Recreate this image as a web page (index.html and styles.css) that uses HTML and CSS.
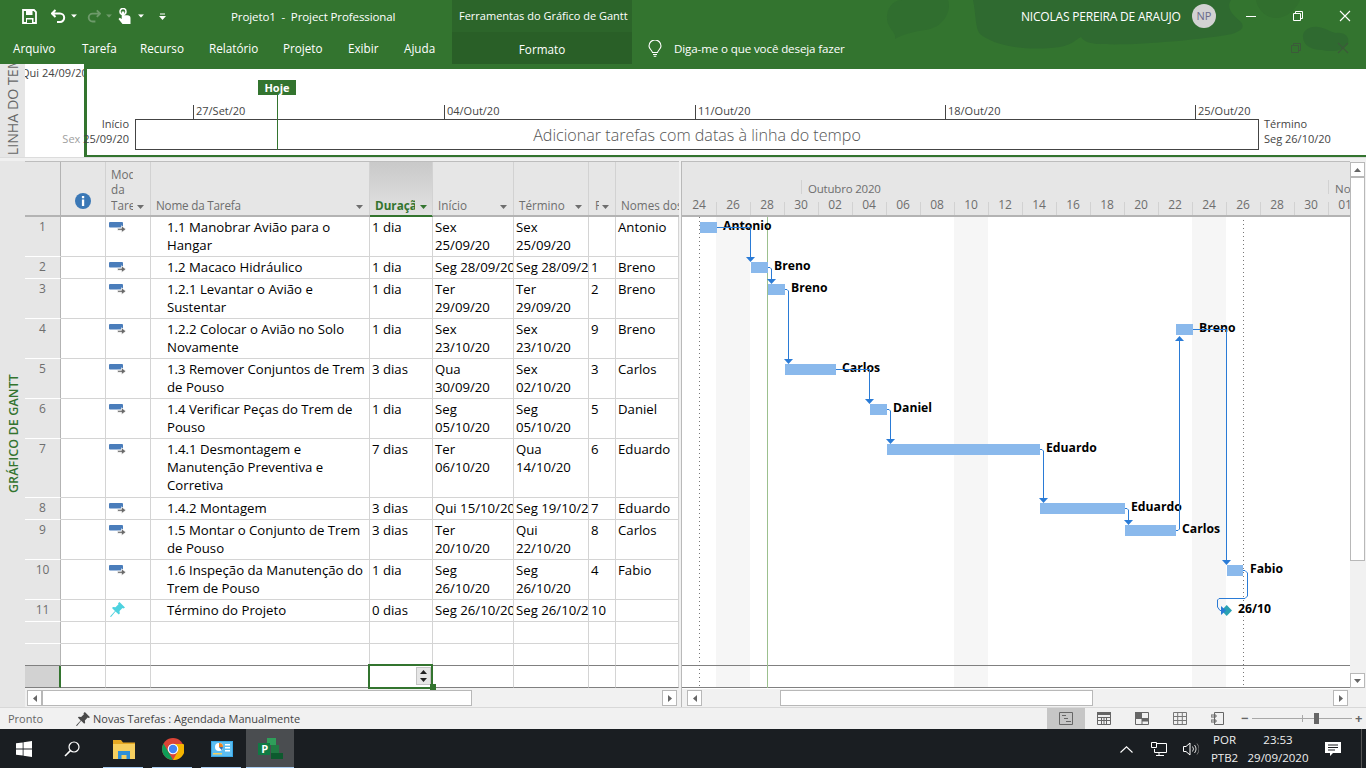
FILE: index.html
```html
<!DOCTYPE html>
<html lang="pt-BR">
<head>
<meta charset="utf-8">
<title>Projeto1 - Project Professional</title>
<link rel="stylesheet" href="styles.css">
</head>
<body>
<svg class="sprite" width="0" height="0" aria-hidden="true">
  <symbol id="mode" viewBox="0 0 17 11">
    <rect x="0" y="0" width="14" height="5.500" rx="1" fill="#4a7dbb"/>
    <path d="M8.500 6.300h4V3.800l4.500 3.400-4.500 3.400V8.300h-4z" fill="#6a6a6a" stroke="#fff" stroke-width=".7"/>
  </symbol>
  <symbol id="caret" viewBox="0 0 7 4"><path d="M0 0h7L3.500 4z"/></symbol>
</svg>
<div class="app">
  <header class="ribbon">
    <svg class="ribbon-art" viewBox="0 0 1366 64" width="1366" height="64" aria-hidden="true">
      <path d="M887 16C888 4 896 0 902 0H948C952 10 944 28 925 30C912 32 904 34 895 39C897 32 886 28 887 16Z" fill="#306e2f"/>
      <path d="M973 0C976 14 975 28 980 34C992 44 1020 52 1060 47C1072 45 1078 38 1081 37C1084 42 1092 44 1100 44C1130 46 1200 40 1232 34C1244 30 1244 26 1241 22C1232 14 1226 8 1231 0Z" fill="#2f6a30"/>
      <path d="M1303 38C1302 30 1310 26 1318 27C1326 28 1330 32 1336 33C1344 32 1350 36 1348 44C1342 52 1330 52 1322 50C1312 50 1304 46 1303 38Z" fill="#2f6a30"/>
      <path d="M1256 0H1300C1296 10 1286 18 1276 18C1266 18 1258 10 1256 0Z" fill="#316f2e"/>
    </svg>
    <div class="titlebar">
      <div class="qat">
        <svg class="qi save" viewBox="0 0 15 15"><path d="M1 1h11l2 2v11H1z" fill="none" stroke="#fff" stroke-width="1.800"/><path d="M4 1.500h6.500V6H4zM4 9h7.500v5H4z" fill="#fff"/><path d="M5 10.500h5v3.500H5z" fill="#33742f"/></svg>
        <svg class="qi undo" viewBox="0 0 15 14"><path d="M4.500 1 1 4.500 4.500 8M1.500 4.500H9a4.200 4.200 0 0 1 0 8.400H6" fill="none" stroke="#fff" stroke-width="2"/></svg>
        <svg class="car" viewBox="0 0 7 4"><use href="#caret"/></svg>
        <svg class="qi redo" viewBox="0 0 15 14"><path d="M10.500 1 14 4.500 10.500 8M13.500 4.500H6a4.200 4.200 0 0 0 0 8.400H9" fill="none" stroke="#6d9a6a" stroke-width="2"/></svg>
        <svg class="car dim" viewBox="0 0 7 4"><use href="#caret"/></svg>
        <svg class="qi touch" viewBox="0 0 13 16"><circle cx="5" cy="3.500" r="3" fill="none" stroke="#fff" stroke-width="1.500"/><path d="M3.700 3.500h2.600v3.700h3.200c1.800 0 3 1 3 2.800V16H4.500L.5 11l1.300-1.300 1.900 1.300z" fill="#fff"/></svg>
        <svg class="car" viewBox="0 0 7 4"><use href="#caret"/></svg>
        <svg class="cust" viewBox="0 0 7 7"><path d="M1 .5h5v1H1zM0 3h7L3.500 7z" fill="#fff"/></svg>
      </div>
      <div class="doc-title">Projeto1&nbsp; - &nbsp;Project Professional</div>
      <div class="context-title">Ferramentas do Gráfico de Gantt</div>
      <div class="account">
        <span class="user">NICOLAS PEREIRA DE ARAUJO</span>
        <span class="avatar">NP</span>
        <div class="winbtns">
          <svg class="wb" viewBox="0 0 12 12"><path d="M1 6.500h10" stroke="#fff"/></svg>
          <svg class="wb" viewBox="0 0 12 12"><path d="M1.500 3.500h7v7h-7zM3.500 3.500v-2h7v7h-2" fill="none" stroke="#fff"/></svg>
          <svg class="wb" viewBox="0 0 12 12"><path d="M1 1l10 10M11 1 1 11" stroke="#fff" stroke-width="1.100"/></svg>
        </div>
      </div>
    </div>
    <nav class="tabs">
      <span class="tab t-arq">Arquivo</span>
      <span class="tab t-tar">Tarefa</span>
      <span class="tab t-rec">Recurso</span>
      <span class="tab t-rel">Relatório</span>
      <span class="tab t-pro">Projeto</span>
      <span class="tab t-exi">Exibir</span>
      <span class="tab t-aju">Ajuda</span>
      <span class="tab-format">Formato</span>
      <svg class="bulb" viewBox="0 0 14 17"><path d="M4.500 12.500C4 10 1 9 1 6a6 6 0 0 1 12 0c0 3-3 4-3.500 6.500zM5 14.500h4M5.700 16.300h2.600" fill="none" stroke="#fff" stroke-width="1.100"/></svg>
      <span class="tell">Diga-me o que você deseja fazer</span>
      <div class="ribbon-ctl">
        <svg class="wb" viewBox="0 0 12 12"><path d="M1.500 3.500h7v7h-7zM3.500 3.500v-2h7v7h-2" fill="none" stroke="#3c5a3a"/></svg>
        <svg class="wb" viewBox="0 0 12 12"><path d="M1 1l10 10M11 1 1 11" stroke="#3c5a3a" stroke-width="1.100"/></svg>
      </div>
    </nav>
  </header>

  <section class="timeline">
    <div class="vstrip tl-strip"><span class="vlabel tl-label">LINHA DO TEMPO</span></div>
    <div class="tl-prev"><span>Qui 24/09/20</span></div>
    <div class="tl-main">
      <div class="tl-scale">
        <div class="today">Hoje</div>
        <span class="tick tk1">27/Set/20</span>
        <span class="tick tk2">04/Out/20</span>
        <span class="tick tk3">11/Out/20</span>
        <span class="tick tk4">18/Out/20</span>
        <span class="tick tk5">25/Out/20</span>
      </div>
      <div class="tl-row">
        <div class="tl-start"><span>Início</span><span><i>Sex </i>25/09/20</span></div>
        <div class="tl-box">Adicionar tarefas com datas à linha do tempo</div>
        <div class="tl-end"><span>Término</span><span>Seg 26/10/20</span></div>
      </div>
    </div>
  </section>
  <div class="band"></div>

  <main class="workspace">
    <div class="vstrip gantt-strip"><span class="vlabel gantt-label">GRÁFICO DE GANTT</span></div>

    <div class="sheet">
      <div class="cols head">
        <div class="hc"></div>
        <div class="hc hc-info"><svg class="info" viewBox="0 0 16 16"><circle cx="8" cy="8" r="8" fill="#3b78b6"/><path d="M6.900 3h2.300v2.200H6.900zM6.900 6.500h2.300V13H6.900z" fill="#fff"/></svg></div>
        <div class="hc hc-mode"><span class="clip">Modo<br>da<br>Tarefa</span><svg class="car gray" viewBox="0 0 7 4"><use href="#caret"/></svg></div>
        <div class="hc"><span class="grow pl name-h">Nome da Tarefa</span><svg class="car gray" viewBox="0 0 7 4"><use href="#caret"/></svg></div>
        <div class="hc hc-sel"><span class="sel-text">Duração</span><svg class="car green" viewBox="0 0 7 4"><use href="#caret"/></svg></div>
        <div class="hc"><span class="grow pl">Início</span><svg class="car gray" viewBox="0 0 7 4"><use href="#caret"/></svg></div>
        <div class="hc"><span class="grow pl">Término</span><svg class="car gray" viewBox="0 0 7 4"><use href="#caret"/></svg></div>
        <div class="hc"><span class="clip narrow">Predecessoras</span><svg class="car gray" viewBox="0 0 7 4"><use href="#caret"/></svg></div>
        <div class="hc hc-last"><span class="clip pl">Nomes dos Recursos</span></div>
      </div>

      <div class="cols row tall"><div class="num">1</div><div class="c"></div><div class="c m"><svg class="mode"><use href="#mode"/></svg></div><div class="c n">1.1 Manobrar Avião para o<br>Hangar</div><div class="c">1 dia</div><div class="c">Sex<br>25/09/20</div><div class="c">Sex<br>25/09/20</div><div class="c"></div><div class="c">Antonio</div></div>
      <div class="cols row"><div class="num">2</div><div class="c"></div><div class="c m"><svg class="mode"><use href="#mode"/></svg></div><div class="c n">1.2 Macaco Hidráulico</div><div class="c">1 dia</div><div class="c">Seg 28/09/20</div><div class="c">Seg 28/09/20</div><div class="c">1</div><div class="c">Breno</div></div>
      <div class="cols row tall"><div class="num">3</div><div class="c"></div><div class="c m"><svg class="mode"><use href="#mode"/></svg></div><div class="c n">1.2.1 Levantar o Avião e<br>Sustentar</div><div class="c">1 dia</div><div class="c">Ter<br>29/09/20</div><div class="c">Ter<br>29/09/20</div><div class="c">2</div><div class="c">Breno</div></div>
      <div class="cols row tall"><div class="num">4</div><div class="c"></div><div class="c m"><svg class="mode"><use href="#mode"/></svg></div><div class="c n">1.2.2 Colocar o Avião no Solo<br>Novamente</div><div class="c">1 dia</div><div class="c">Sex<br>23/10/20</div><div class="c">Sex<br>23/10/20</div><div class="c">9</div><div class="c">Breno</div></div>
      <div class="cols row tall"><div class="num">5</div><div class="c"></div><div class="c m"><svg class="mode"><use href="#mode"/></svg></div><div class="c n">1.3 Remover Conjuntos de Trem<br>de Pouso</div><div class="c">3 dias</div><div class="c">Qua<br>30/09/20</div><div class="c">Sex<br>02/10/20</div><div class="c">3</div><div class="c">Carlos</div></div>
      <div class="cols row tall"><div class="num">6</div><div class="c"></div><div class="c m"><svg class="mode"><use href="#mode"/></svg></div><div class="c n">1.4 Verificar Peças do Trem de<br>Pouso</div><div class="c">1 dia</div><div class="c">Seg<br>05/10/20</div><div class="c">Seg<br>05/10/20</div><div class="c">5</div><div class="c">Daniel</div></div>
      <div class="cols row taller"><div class="num">7</div><div class="c"></div><div class="c m"><svg class="mode"><use href="#mode"/></svg></div><div class="c n">1.4.1 Desmontagem e<br>Manutenção Preventiva e<br>Corretiva</div><div class="c">7 dias</div><div class="c">Ter<br>06/10/20</div><div class="c">Qua<br>14/10/20</div><div class="c">6</div><div class="c">Eduardo</div></div>
      <div class="cols row"><div class="num">8</div><div class="c"></div><div class="c m"><svg class="mode"><use href="#mode"/></svg></div><div class="c n">1.4.2 Montagem</div><div class="c">3 dias</div><div class="c">Qui 15/10/20</div><div class="c">Seg 19/10/20</div><div class="c">7</div><div class="c">Eduardo</div></div>
      <div class="cols row tall"><div class="num">9</div><div class="c"></div><div class="c m"><svg class="mode"><use href="#mode"/></svg></div><div class="c n">1.5 Montar o Conjunto de Trem<br>de Pouso</div><div class="c">3 dias</div><div class="c">Ter<br>20/10/20</div><div class="c">Qui<br>22/10/20</div><div class="c">8</div><div class="c">Carlos</div></div>
      <div class="cols row tall"><div class="num">10</div><div class="c"></div><div class="c m"><svg class="mode"><use href="#mode"/></svg></div><div class="c n">1.6 Inspeção da Manutenção do<br>Trem de Pouso</div><div class="c">1 dia</div><div class="c">Seg<br>26/10/20</div><div class="c">Seg<br>26/10/20</div><div class="c">4</div><div class="c">Fabio</div></div>
      <div class="cols row"><div class="num">11</div><div class="c"></div><div class="c m"><svg class="pin" viewBox="0 0 15 15"><path d="M9.500 0 15 5.500l-1.500 1-1-.5-3 3 .3 2.500-1 1L5.500 9.500 1 15l-1-.5L5 9 2 6l1-1 2.500.300 3-3-.5-1z" fill="#4dd2df"/></svg></div><div class="c n">Término do Projeto</div><div class="c">0 dias</div><div class="c">Seg 26/10/20</div><div class="c">Seg 26/10/20</div><div class="c">10</div><div class="c"></div></div>
      <div class="cols row"><div class="num"></div><div class="c"></div><div class="c"></div><div class="c"></div><div class="c"></div><div class="c"></div><div class="c"></div><div class="c"></div><div class="c"></div></div>
      <div class="cols row lastrow"><div class="num"></div><div class="c"></div><div class="c"></div><div class="c"></div><div class="c"></div><div class="c"></div><div class="c"></div><div class="c"></div><div class="c"></div></div>
      <div class="cols row active"><div class="num"></div><div class="c"></div><div class="c"></div><div class="c"></div><div class="c c-cur">
          <span class="spin"><svg class="spin-a" viewBox="0 0 7 4"><path d="M0 4h7L3.500 0z"/></svg><svg class="spin-a" viewBox="0 0 7 4"><use href="#caret"/></svg></span>
          <span class="handle"></span>
        </div><div class="c"></div><div class="c"></div><div class="c"></div><div class="c"></div></div>

      <div class="hscroll hs-left">
        <span class="sb-btn"><svg viewBox="0 0 4 7"><path d="M4 0v7L0 3.500z"/></svg></span>
        <span class="sb-thumb th-left"></span>
        <span class="sb-track"></span>
        <span class="sb-btn"><svg viewBox="0 0 4 7"><path d="M0 0v7l4-3.500z"/></svg></span>
      </div>
    </div>

    <div class="split"></div>

    <div class="chart">
      <div class="ch-head">
        <div class="ch-months"><span class="mon-pad"></span><span class="mon m-out">Outubro 2020</span><span class="mon m-nov">Nov</span></div>
        <div class="ch-days">
          <span>24</span><span>26</span><span>28</span><span>30</span><span>02</span><span>04</span><span>06</span><span>08</span><span>10</span><span>12</span><span>14</span><span>16</span><span>18</span><span>20</span><span>22</span><span>24</span><span>26</span><span>28</span><span>30</span><span>01</span>
        </div>
      </div>
      <svg class="ch-body" viewBox="682 217 668 472" width="668" height="472">
        <g fill="#f6f6f6">
          <rect x="716" y="217" width="34" height="471"/>
          <rect x="954" y="217" width="34" height="471"/>
          <rect x="1192" y="217" width="34" height="471"/>
        </g>
        <path d="M682 665.500H1350M682 687.500H1350" stroke="#808080"/>
        <path d="M699.500 217V688" stroke="#777" stroke-dasharray="1 3"/>
        <path d="M1243.500 220V688" stroke="#777" stroke-dasharray="1 3"/>
        <path d="M767.500 217V688" stroke="#9cc08e"/>
        <g fill="#8ab9ec">
          <rect x="700" y="222" width="17" height="11"/>
          <rect x="751" y="262" width="17" height="11"/>
          <rect x="768" y="284" width="17" height="11"/>
          <rect x="1176" y="324" width="17" height="11"/>
          <rect x="785" y="364" width="51" height="11"/>
          <rect x="870" y="404" width="17" height="11"/>
          <rect x="887" y="444" width="153" height="11"/>
          <rect x="1040" y="503" width="85" height="11"/>
          <rect x="1125" y="525" width="51" height="11"/>
          <rect x="1227" y="565" width="16" height="11"/>
        </g>
        <g class="labels">
          <text x="723" y="230">Antonio</text>
          <text x="774" y="270">Breno</text>
          <text x="791" y="292">Breno</text>
          <text x="1199" y="332">Breno</text>
          <text x="842" y="372">Carlos</text>
          <text x="893" y="412">Daniel</text>
          <text x="1046" y="452">Eduardo</text>
          <text x="1131" y="511">Eduardo</text>
          <text x="1182" y="533">Carlos</text>
          <text x="1250" y="573">Fabio</text>
          <text x="1238" y="613">26/10</text>
        </g>
        <g fill="none" stroke="#2a7bd6">
          <path d="M717 227.500H750.500V258"/>
          <path d="M768 267.500H770L771.500 269V280"/>
          <path d="M785 289.500H787L788.500 291V360"/>
          <path d="M836 369.500H869.500V400"/>
          <path d="M887 409.500H889L890.500 411V440"/>
          <path d="M1040 449.500H1042L1043.500 451V499"/>
          <path d="M1125 508.500H1127L1128.500 510V521"/>
          <path d="M1176 530.500H1178L1179.500 529V340"/>
          <path d="M1193 329.500H1226.500V561"/>
          <path d="M1243 570.500H1245L1247.500 573V596L1245 598.500H1219L1217.500 600V607L1220 610.500H1225"/>
        </g>
        <g fill="#2a7bd6">
          <path d="M746 257h9l-4.500 5z"/>
          <path d="M767 279h9l-4.500 5z"/>
          <path d="M784 359h9l-4.500 5z"/>
          <path d="M865 399h9l-4.500 5z"/>
          <path d="M886 439h9l-4.500 5z"/>
          <path d="M1039 498h9l-4.500 5z"/>
          <path d="M1124 520h9l-4.500 5z"/>
          <path d="M1175 341h9l-4.500-5z"/>
          <path d="M1222 560h9l-4.500 5z"/>
        </g>
        <path d="M1226.700 605 1232 610.500 1226.700 616 1221.500 610.500z" fill="#2aa1b3"/>
        <path d="M1221 606v9l5-4.500z" fill="#2a7bd6"/>
      </svg>
      <div class="hscroll hs-right">
        <span class="sb-offset"></span>
        <span class="sb-btn"><svg viewBox="0 0 4 7"><path d="M4 0v7L0 3.500z"/></svg></span>
        <span class="sb-track t1"></span>
        <span class="sb-thumb th-right"></span>
        <span class="sb-track"></span>
        <span class="sb-btn"><svg viewBox="0 0 4 7"><path d="M0 0v7l4-3.500z"/></svg></span>
      </div>
    </div>

    <div class="vscroll">
      <span class="sb-btn vb"><svg viewBox="0 0 7 4"><path d="M0 4h7L3.500 0z"/></svg></span>
      <span class="sb-thumb th-v"></span>
      <span class="sb-track"></span>
      <span class="sb-btn vb"><svg viewBox="0 0 7 4"><use href="#caret"/></svg></span>
    </div>
  </main>

  <footer class="status">
    <span class="ready">Pronto</span>
    <svg class="st-pin" viewBox="0 0 15 15"><path d="M9.500 0 15 5.500l-1.500 1-1-.5-3 3 .3 2.500-1 1L5.500 9.500 1 15l-1-.5L5 9 2 6l1-1 2.500.300 3-3-.5-1z" fill="#4a4a4a"/></svg>
    <span class="newtask">Novas Tarefas : Agendada Manualmente</span>
    <div class="views">
      <span class="view on"><svg viewBox="0 0 14 13"><path d="M.5.500h13v12H.5zM3 3.500h4M5 6.500h4M7 9.500h5" fill="none" stroke="#666"/></svg></span>
      <span class="view"><svg viewBox="0 0 14 13"><path d="M0 0h14v3H0z" fill="#666"/><path d="M.5 3v9.500h13V3M4.500 5v7.500M7 5v7.500M9.500 5v7.500M.5 5.500h13M.5 8.500h13" fill="none" stroke="#666"/></svg></span>
      <span class="view"><svg viewBox="0 0 14 13"><path d="M.5.500h13v12H.5zM.5 6.500h13M7 6.500v6" fill="none" stroke="#666"/><path d="M0 0h7v6H0zM7 6.500h7v3H7z" fill="#666"/></svg></span>
      <span class="view"><svg viewBox="0 0 14 13"><path d="M.5.500h13v12H.5zM.5 4.500h13M.5 8.500h13M4.700.500v12M9.300.500v12" fill="none" stroke="#777"/></svg></span>
      <span class="view"><svg viewBox="0 0 14 13"><path d="M3.500.500h9v12h-9zM0 3h5v2H0zM0 8h5v2H0z" fill="none" stroke="#666"/></svg></span>
    </div>
    <div class="zoomer">
      <span class="z-sign">−</span>
      <div class="z-track"><span class="z-mid"></span><span class="z-thumb"></span></div>
      <span class="z-sign">+</span>
    </div>
  </footer>

  <div class="taskbar">
    <div class="tb-left">
      <span class="tb-item start"><svg viewBox="0 0 16 16"><path d="M0 2.300 6.700 1.400V7.600H0zM7.500 1.300 16 0V7.600H7.500zM0 8.400H6.700V14.600L0 13.700zM7.500 8.400H16V16L7.500 14.700z" fill="#fff"/></svg></span>
      <span class="tb-item search"><svg viewBox="0 0 16 16"><circle cx="10" cy="6" r="5" fill="none" stroke="#fff" stroke-width="1.200"/><path d="M6.400 9.600 1 15" stroke="#fff" stroke-width="1.500"/></svg></span>
      <span class="tb-item tb-app"><svg viewBox="0 0 22 19"><path d="M0 0h8l2 2.500h12V6H0z" fill="#e5a823"/><path d="M0 4h22v15H0z" fill="#f6cf5f"/><path d="M5 11h12v8h-3.500v-4h-5v4H5z" fill="#2f8fd8"/></svg></span>
      <span class="tb-item tb-app"><svg viewBox="0 0 22 22"><circle cx="11" cy="11" r="11" fill="#db4437"/><path d="M11 22A11 11 0 0 1 1.500 5.500L7 15z" fill="#0f9d58"/><path d="M11 22 16 13 11 6H21.500A11 11 0 0 1 11 22z" fill="#f4b400"/><circle cx="11" cy="11" r="5.300" fill="#fff"/><circle cx="11" cy="11" r="4.200" fill="#4285f4"/></svg></span>
      <span class="tb-item tb-app"><svg viewBox="0 0 22 16"><path d="M0 0h22v16H0z" fill="#37a7e6"/><path d="M1 1h20v14H1z" fill="#5dbdf0"/><circle cx="8" cy="6" r="4" fill="#fff"/><path d="M8 6V2a4 4 0 0 1 4 4z" fill="#f0831e"/><path d="M8 6h4a4 4 0 0 1-1.500 3z" fill="#2d6fb5"/><path d="M14 3h5v1.500h-5zM14 6h5v1.500h-5zM14 9h5v1.500h-5z" fill="#fff"/><path d="M2 12h9v1.500H2z" fill="#f6cf5f"/></svg></span>
      <span class="tb-item tb-active"><svg viewBox="0 0 25 22"><path d="M9 0h9v7H9z" fill="#2f9e5a"/><path d="M13 7h8v8h-8z" fill="#207a43"/><path d="M13 15h12v6H13z" fill="#0d5a2e"/><path d="M0 5h12v12H0z" fill="#107a44"/><text class="p-glyph" x="3.200" y="14.500">P</text></svg></span>
    </div>
    <div class="tb-tray">
      <svg class="tr chev" viewBox="0 0 13 7"><path d="M.5 6.500 6.500.8l6 5.700" fill="none" stroke="#fff" stroke-width="1.100"/></svg>
      <svg class="tr net" viewBox="0 0 16 14"><path d="M3.500 1.500H15.500V10.500H3.500V7M8 10.500v2.500M5 13.500h8" fill="none" stroke="#fff"/><path d="M.5.500h5v5h-5z" fill="#1b1d20" stroke="#fff"/></svg>
      <svg class="tr vol" viewBox="0 0 16 14"><path d="M.5 4.500H3L7 1v12L3 9.500H.5z" fill="none" stroke="#fff"/><path d="M9.500 4.500a4 4 0 0 1 0 5M11.500 3a6.500 6.500 0 0 1 0 8" fill="none" stroke="#ddd"/><path d="M14 1.500a9 9 0 0 1 0 11" fill="none" stroke="#777"/></svg>
      <span class="lang"><span>POR</span><span>PTB2</span></span>
      <span class="clock"><span>23:53</span><span>29/09/2020</span></span>
      <svg class="tr notif" viewBox="0 0 16 15"><path d="M0 0h16v11H8L5 14v-3H0z" fill="#fff"/><path d="M3 3h10M3 5.500h10M3 8h7" stroke="#1b1d20"/></svg>
      <span class="showdesk"></span>
    </div>
  </div>
</div>
</body>
</html>
```
FILE: styles.css
```css
* { box-sizing: border-box; }
html, body { margin: 0; padding: 0; }
body { width: 1366px; height: 768px; overflow: hidden; font-family: "Open Sans", "Noto Sans", "Liberation Sans", sans-serif; font-size: 12px; color: #1a1a1a; background: #fff; }
.sprite { display: block; height: 0; position: absolute; }
.app { width: 1366px; height: 768px; display: flex; flex-direction: column; overflow: hidden; }

/* ribbon */
.ribbon { height: 64px; background: #33742f; color: #fff; position: relative; flex: none; }
.ribbon-art { position: absolute; left: 0; top: 0; }
.titlebar { height: 32px; display: flex; align-items: center; position: relative; }
.qat { width: 231px; flex: none; display: flex; align-items: center; height: 32px; padding-left: 22px; }
.qi { display: block; flex: none; }
.save { width: 15px; height: 15px; margin-right: 14px; }
.undo { width: 15px; height: 14px; margin-right: 5px; }
.redo { width: 14px; height: 14px; margin: 0 5px 0 10px; }
.touch { width: 13px; height: 16px; margin: 0 7px 0 6px; }
.car { width: 6px; height: 4px; fill: #fff; display: block; flex: none; }
.car.dim { fill: #6d9a6a; }
.car.gray { fill: #6e6e6e; width: 7px; }
.car.green { fill: #33742f; width: 7px; }
.cust { width: 7px; height: 7px; margin-left: 15px; }
.doc-title { width: 228px; flex: none; font-size: 11.500px; letter-spacing: -.1px; white-space: nowrap; }
.context-title { flex: none; font-size: 11px; white-space: nowrap; background: #2c652a; height: 32px; line-height: 32px; margin-left: -7px; padding-left: 7px; width: 180px; }
.account { margin-left: auto; display: flex; align-items: center; }
.user { width: 171px; font-size: 12px; letter-spacing: -.2px; white-space: nowrap; }
.avatar { width: 24px; height: 24px; border-radius: 50%; background: #d2d2d2; color: #6a6a8a; font-size: 11px; text-align: center; line-height: 24px; }
.winbtns { display: flex; width: 150px; gap: 35px; padding-left: 29px; }
.wb { width: 12px; height: 12px; display: block; flex: none; }
.tabs { height: 32px; display: flex; align-items: center; position: relative; padding-left: 13px; font-size: 11.700px; }
.tab { white-space: nowrap; flex: none; }
.t-arq { width: 69px; } .t-tar { width: 58px; } .t-rec { width: 69px; } .t-rel { width: 74px; } .t-pro { width: 65px; } .t-exi { width: 56px; } .t-aju { width: 48px; }
.tab-format { width: 180px; height: 32px; line-height: 34px; background: #295f27; text-align: center; flex: none; }
.bulb { width: 14px; height: 17px; margin-left: 16px; flex: none; }
.tell { margin-left: 12px; font-size: 11.600px; letter-spacing: -.13px; white-space: nowrap; }
.ribbon-ctl { margin-left: auto; display: flex; gap: 35px; padding-right: 17px; }

/* timeline */
.timeline { height: 93px; display: flex; flex: none; background: #fff; }
.vstrip { width: 25px; background: #e6e6e6; flex: none; overflow: hidden; position: relative; }
.vlabel { position: absolute; writing-mode: vertical-rl; transform: rotate(180deg); white-space: nowrap; }
.tl-label { left: 3px; bottom: 2px; font-size: 14.200px; color: #666; }
.tl-prev { width: 59px; flex: none; overflow: hidden; position: relative; white-space: nowrap; font-size: 11px; padding-top: 1px; color: #444; }
.tl-prev span { display: block; margin-left: -4px; }
.tl-main { flex: 1; min-width: 0; border-left: 3px solid #33742f; border-top: 5px solid #33742f; border-bottom: 2px solid #33742f; display: flex; flex-direction: column; font-size: 11px; color: #444; position: relative; }
.tl-scale { height: 46px; position: relative; flex: none; }
.today { position: absolute; left: 171px; top: 11px; width: 38px; height: 15px; background: #33742f; color: #fff; font-weight: 700; font-size: 11px; line-height: 15px; text-align: center; z-index: 2; }
.today::after { content: ""; position: absolute; left: 19px; top: 15px; width: 1px; height: 55px; background: #33742f; }
.tick { position: absolute; top: 36px; height: 14px; border-left: 1px solid #444; padding-left: 2px; line-height: 12px; white-space: nowrap; font-size: 11px; }
.tk1 { left: 106px; } .tk2 { left: 357px; } .tk3 { left: 608px; } .tk4 { left: 858px; } .tk5 { left: 1108px; }
.tl-row { display: flex; height: 40px; }
.tl-start { width: 42px; flex: none; display: flex; flex-direction: column; align-items: flex-end; line-height: 15px; padding-top: 1px; white-space: nowrap; margin-right: 6px; }
.tl-start i { font-style: normal; color: #a0a0a0; }
.tl-box { width: 1124px; flex: none; height: 31px; margin-top: 4px; border: 1px solid #444; text-align: center; font-size: 16.100px; font-weight: 300; line-height: 30px; color: #555; }
.tl-end { display: flex; flex-direction: column; line-height: 15px; padding: 1px 0 0 5px; white-space: nowrap; }
.band { height: 4px; flex: none; background: #f0f0f0; border-top: 1px solid #dcdcdc; }

/* workspace */
.workspace { height: 546px; display: flex; flex: none; background: #f1f1f1; }
.gantt-strip { height: 546px; }
.gantt-label { left: 5px; top: 213px; font-size: 12.500px; font-weight: 600; color: #33742f; letter-spacing: .1px; }
.sheet { width: 654px; flex: none; display: flex; flex-direction: column; font-size: 13.200px; }
.cols { display: grid; grid-template-columns: 36px 45px 45px 219px 63px 81px 75px 27px 63px; }
.head { height: 56px; border-top: 1px solid #bdbdbd; border-bottom: 2px solid #b3b3b3; background: #e6e6e6; color: #6e6e6e; flex: none; font-size: 11.700px; }
.hc { display: flex; align-items: flex-end; padding: 0 6px 2px 0; border-right: 1px solid #d2d2d2; overflow: hidden; min-width: 0; gap: 3px; line-height: 15.500px; white-space: nowrap; }
.hc:first-child { border-right: 1px solid #b3b3b3; }
.hc .car { margin-bottom: 4px; flex: none; }
.hc-last { padding-right: 0; border-right: 0; }
.pl { padding-left: 5px; }
.name-h { letter-spacing: -.2px; }
.grow { flex: 1; min-width: 0; }
.clip { overflow: hidden; flex: 1; min-width: 0; }
.narrow { padding-left: 6px; }
.hc-info { justify-content: center; padding: 0 0 6px; }
.info { width: 16px; height: 16px; display: block; }
.hc-mode { padding-left: 5px; padding-right: 6px; gap: 4px; }
.hc-sel { background: linear-gradient(#c9c9c9, #e2e2e2); border-bottom: 2px solid #33742f; margin-bottom: -2px; color: #33742f; font-weight: 700; padding-left: 5px; gap: 5px; padding-right: 5px; }
.sel-text { width: 40px; overflow: hidden; flex: none; }
.row { height: 22px; background: #fff; flex: none; line-height: 18px; color: #000; }
.row.tall { height: 40px; }
.row.taller { height: 59px; }
.num { background: #e6e6e6; border-right: 1px solid #b3b3b3; border-bottom: 1px solid #fff; text-align: center; color: #6e6e6e; font-size: 12px; line-height: 18px; padding-top: 1px; }
.c { border-right: 1px solid #d4d4d4; border-bottom: 1px solid #d4d4d4; padding: 1px 0 0 2px; overflow: hidden; white-space: nowrap; min-width: 0; position: relative; }
.c.m { padding: 5px 0 0 3px; }
.c.n { padding-left: 16px; }
.mode { width: 17px; height: 11px; display: block; }
.pin { width: 15px; height: 15px; display: block; margin-top: -3px; margin-left: 1px; }
.row.lastrow .c, .row.lastrow .num { border-bottom: 1px solid #808080; }
.row.active { height: 22px; overflow: visible; }
.row.active .c { border-bottom: 1px solid #808080; overflow: visible; }
.row.active .num { background: #d2d2d2; border-bottom: 1px solid #808080; border-right: 2px solid #33742f; }
.c-cur { z-index: 2; }
.c-cur::before { content: ""; position: absolute; left: -2px; top: -2px; right: -1px; bottom: -2px; border: 2px solid #33742f; }
.spin { position: absolute; right: 1px; top: 1px; width: 15px; height: 18px; background: #e6e6e6; border: 1px solid #c4c4c4; display: flex; flex-direction: column; align-items: center; justify-content: space-around; }
.spin-a { width: 7px; height: 4px; fill: #222; display: block; }
.handle { position: absolute; right: -4px; bottom: -3px; width: 6px; height: 6px; background: #33742f; }

/* scrollbars */
.hscroll { height: 18px; display: flex; align-items: stretch; flex: none; background: #f1f1f1; padding: 1px 0; }
.hs-left { height: 19px; padding: 2px 2px 1px 2px; }
.sb-btn { width: 15px; flex: none; background: #fff; border: 1px solid #b8b8b8; display: flex; align-items: center; justify-content: center; }
.sb-btn svg { width: 4px; height: 7px; fill: #666; display: block; }
.sb-thumb { flex: none; background: #fff; border: 1px solid #b8b8b8; }
.sb-track { flex: 1; }
.th-left { width: 430px; }
.split { width: 3px; flex: none; background: #f1f1f1; border-right: 1px solid #b9b9b9; }
.chart { width: 668px; flex: none; display: flex; flex-direction: column; overflow: hidden; }
.ch-head { height: 56px; background: #e6e6e6; border-top: 1px solid #bdbdbd; border-bottom: 2px solid #b3b3b3; flex: none; color: #6e6e6e; font-size: 12px; display: flex; flex-direction: column; justify-content: flex-end; }
.ch-months { display: flex; height: 14px; white-space: nowrap; font-size: 11.500px; }
.mon-pad { width: 119px; flex: none; }
.mon { border-left: 1px solid #d2d2d2; padding-left: 6px; flex: none; line-height: 18px; }
.m-out { width: 527px; letter-spacing: -.2px; }
.ch-days { display: flex; height: 21px; }
.ch-days span { width: 34px; flex: none; text-align: center; line-height: 21px; position: relative; }
.ch-days span::after { content: ""; position: absolute; right: -1px; bottom: 0; height: 13px; width: 1px; background: #d2d2d2; }
.ch-body { display: block; background: #fff; flex: none; }
.labels text { font-family: "Open Sans", "Noto Sans", sans-serif; font-size: 12.200px; font-weight: 700; fill: #000; }
.hs-right { padding-right: 2px; }
.sb-offset { width: 5px; flex: none; }
.t1 { flex: none; width: 78px; }
.th-right { width: 313px; }
.vscroll { width: 16px; flex: none; display: flex; flex-direction: column; padding: 1px 1px 19px 0; background: #f1f1f1; }
.vb { width: 15px; height: 15px; }
.vb svg { width: 7px; height: 4px; }
.th-v { height: 384px; }

/* status */
.status { height: 22px; flex: none; background: #f1f1f1; border-top: 1px solid #d8d8d8; display: flex; align-items: center; font-size: 11px; color: #555; }
.ready { margin-left: 8px; width: 68px; color: #666; }
.st-pin { width: 14px; height: 14px; flex: none; }
.newtask { margin-left: 3px; color: #444; white-space: nowrap; }
.views { margin-left: auto; display: flex; height: 21px; }
.view { width: 38px; display: flex; align-items: center; justify-content: center; }
.view svg { width: 14px; height: 13px; display: block; }
.view.on { background: #c6c6c6; }
.zoomer { display: flex; align-items: center; width: 129px; padding-left: 4px; }
.z-sign { font-weight: 700; font-size: 13px; color: #666; width: 11px; line-height: 1; }
.z-track { width: 100px; height: 1px; background: #a8a8a8; position: relative; margin-right: 3px; flex: none; }
.z-mid { position: absolute; left: 50px; top: -3px; width: 1px; height: 7px; background: #a8a8a8; }
.z-thumb { position: absolute; left: 62px; top: -5px; width: 5px; height: 11px; background: #666; }

/* taskbar */
.taskbar { height: 40px; flex: none; background: #1a1e22; display: flex; justify-content: space-between; color: #eee; }
.tb-left { display: flex; }
.tb-item { height: 40px; display: flex; align-items: center; justify-content: center; flex: none; }
.start { width: 48px; }
.start svg { width: 16px; height: 16px; }
.search { width: 48px; margin-right: 3px; }
.search svg { width: 16px; height: 16px; }
.tb-app { width: 49px; position: relative; }
.tb-app svg { width: 22px; max-height: 22px; display: block; }
.tb-app::after, .tb-active::after { content: ""; position: absolute; left: 4px; right: 5px; bottom: 0; height: 2px; background: #a9cdf2; }
.tb-active { width: 48px; position: relative; background: #4a4d50; }
.tb-active::after { left: 0; right: 0; }
.tb-active svg { width: 25px; height: 22px; display: block; }
.p-glyph { font-family: "Open Sans", sans-serif; font-size: 11px; font-weight: 700; fill: #fff; }
.tb-tray { display: flex; align-items: center; }
.tr { display: block; flex: none; }
.chev { width: 13px; height: 7px; margin-right: 18px; }
.net { width: 16px; height: 14px; margin-right: 16px; }
.vol { width: 16px; height: 14px; margin-right: 12px; }
.lang, .clock { display: flex; flex-direction: column; align-items: center; line-height: 18px; font-size: 11.500px; white-space: nowrap; }
.lang { width: 27px; margin-right: 11px; }
.clock { width: 58px; margin-right: 18px; }
.notif { width: 16px; height: 15px; margin-right: 20px; }
.showdesk { width: 1px; height: 40px; background: #555; margin-right: 4px; }
```
